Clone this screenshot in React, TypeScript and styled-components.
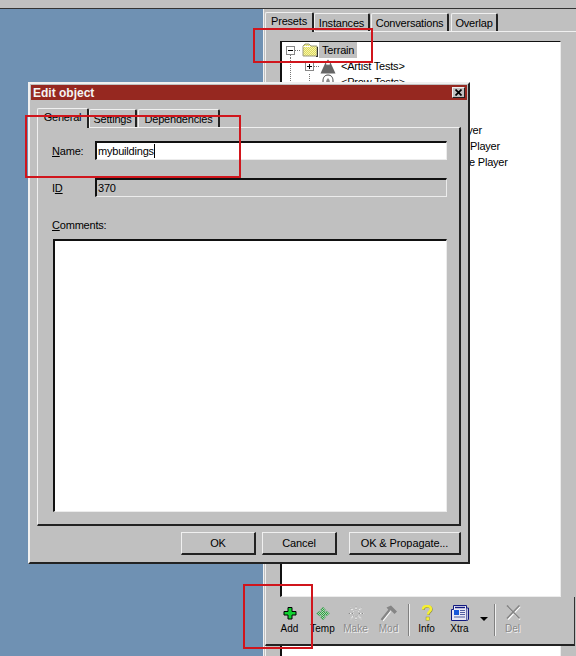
import styled, { createGlobalStyle, css } from "styled-components";

const GlobalStyle = createGlobalStyle`
html, body {
  margin: 0;
  padding: 0;
  background: #c0c0c0;
}
* {
  box-sizing: border-box;
}
`

const sunken = css`
border-style: solid;
border-width: 2px 1px 1px 2px;
border-color: #111 #ececec #ececec #111;
`

function Guide({ kind }: { kind: "box-minus" | "box-plus" | "line" | "branch" | "none" }): JSX.Element {
  const hasBox = kind === "box-minus" || kind === "box-plus";
  return (
    <svg width="19" height="16" viewBox="0 0 19 16">
      {kind === "line" && <path d="M8.5 0V16" stroke="#777" strokeDasharray="1 1" />}
      {kind === "branch" && <path d="M8.5 0V8M9 8.5H19" stroke="#777" strokeDasharray="1 1" />}
      {hasBox && <path d="M13 8.5H19" stroke="#777" strokeDasharray="1 1" />}
      {kind === "box-minus" && <path d="M8.5 13V16" stroke="#777" strokeDasharray="1 1" />}
      {hasBox && <rect x="4.5" y="4.5" width="8" height="8" fill="#fff" stroke="#888" />}
      {hasBox && <path d="M6 8.5H11" stroke="#000" />}
      {kind === "box-plus" && <path d="M8.5 6V11" stroke="#000" />}
    </svg>
  );
}

function FolderIcon(): JSX.Element {
  return (
    <svg width="16" height="14" viewBox="0 0 16 14">
      <defs>
        <pattern id="folderDither" width="2" height="2" patternUnits="userSpaceOnUse">
          <rect width="2" height="2" fill="#f8f6a8" />
          <rect width="1" height="1" fill="#dcd860" />
          <rect x="1" y="1" width="1" height="1" fill="#dcd860" />
        </pattern>
      </defs>
      <path d="M1 3L3 1H7L9 3H15V13H1Z" fill="url(#folderDither)" stroke="#9a9a80" />
      <path d="M14 13.5H16M15.5 4V13" stroke="#333" />
      <path d="M1.5 3.5H8" stroke="#fff" />
    </svg>
  );
}

function MountainIcon(): JSX.Element {
  return (
    <svg width="16" height="15" viewBox="0 0 16 15">
      <path d="M0.5 14.5L5.5 3.5L8 0.5L10.5 3.5L15.5 14.5Z" fill="#666" />
      <path d="M6 4.5L8 1.8L10 4.5L9 6.5L8 5L7 6.5Z" fill="#fff" />
    </svg>
  );
}

function DomeIcon(): JSX.Element {
  return (
    <svg width="16" height="16" viewBox="0 0 16 16">
      <path d="M3 14V7C3 3 5 1 8 1C11 1 13 3 13 7V14Z" fill="#fff" stroke="#444" />
      <path d="M5 14L6.5 6L8 4L9.5 6L11 14Z" fill="#888" />
    </svg>
  );
}

function AddIcon(): JSX.Element {
  return (
    <svg width="16" height="16" viewBox="0 0 16 16">
      <path d="M6 2.5H10V6.5H14V10H10V14H6V10H2V6.5H6Z" fill="#10d030" stroke="#000" />
    </svg>
  );
}

function TempIcon(): JSX.Element {
  return (
    <svg width="16" height="16" viewBox="0 0 16 16">
      <defs>
        <pattern id="tempDither" width="2" height="2" patternUnits="userSpaceOnUse">
          <rect width="2" height="2" fill="#b4dcb4" />
          <rect width="1" height="1" fill="#2c9a44" />
          <rect x="1" y="1" width="1" height="1" fill="#2c9a44" />
        </pattern>
      </defs>
      <path d="M8 2L10.5 5H9.5V7H11.5V6L14.5 8.5L11.5 11V10H9.5V12H10.5L8 15L5.5 12H6.5V10H4.5V11L1.5 8.5L4.5 6V7H6.5V5H5.5Z" fill="url(#tempDither)" stroke="#5ca86c" strokeWidth="0.6" />
    </svg>
  );
}

function MakeIcon(): JSX.Element {
  const rays = "M8 1V6M8 11V16M0.5 8.5H5.5M10.5 8.5H15.5M2.5 3L6 6.5M10 10.5L13.5 14M13.5 3L10 6.5M6 10.5L2.5 14";
  return (
    <svg width="16" height="16" viewBox="0 0 16 16">
      <path d={rays} stroke="#f4f4f4" strokeWidth="1.2" />
      <path d={rays} stroke="#8c8c8c" strokeWidth="1" strokeDasharray="1.5 1.5" />
    </svg>
  );
}

function ModIcon(): JSX.Element {
  return (
    <svg width="18" height="16" viewBox="0 0 18 16">
      <path d="M2.5 15.5L10 6" stroke="#fff" strokeWidth="2.4" />
      <path d="M1.5 15L9.5 5" stroke="#858585" strokeWidth="2.2" />
      <path d="M6.5 2.5L11 0.5L17 6.5L14.5 9L10.5 5L9 5.5Z" fill="#858585" />
    </svg>
  );
}

function InfoIcon(): JSX.Element {
  return (
    <svg width="16" height="16" viewBox="0 0 16 16">
      <path d="M4.5 5C4.5 2.5 6 1.5 8.5 1.5C11 1.5 12.5 2.5 12.5 4.5C12.5 7 9.5 7 9.5 10" fill="none" stroke="#8a8a50" strokeWidth="2.4" />
      <path d="M4 4.5C4 2 5.5 1 8 1C10.5 1 12 2 12 4C12 6.5 9 6.5 9 9.5" fill="none" stroke="#f6f030" strokeWidth="2.4" />
      <rect x="7" y="12" width="3.5" height="3.5" fill="#f6f030" stroke="#8a8a50" strokeWidth="0.5" />
    </svg>
  );
}

function XtraIcon(): JSX.Element {
  return (
    <svg width="20" height="16" viewBox="0 0 20 16">
      <path d="M3.5 0.5H16.5V15.5H1.5V4.5H3.5Z" fill="#e8e8f4" stroke="#101880" />
      <path d="M16.5 3H18.5V14C18.5 15 17.5 15.5 16.5 15.5" fill="#b8c0d8" stroke="#101880" />
      <path d="M5 2.5H15" stroke="#101880" strokeWidth="1.4" />
      <rect x="4" y="5" width="5" height="5" fill="#1858d8" />
      <path d="M10 5.5H15M10 7.5H15M10 9.5H15M4 12H15" stroke="#5060a0" />
    </svg>
  );
}

function DelIcon(): JSX.Element {
  return (
    <svg width="16" height="16" viewBox="0 0 16 16">
      <path d="M3 1.5L15 14.5M15 1.5L3 14.5" stroke="#fff" strokeWidth="1.6" />
      <path d="M2 0.5L14.5 13.5M14.5 0.5L2 13.5" stroke="#858585" strokeWidth="1.6" />
    </svg>
  );
}

function CloseIcon(): JSX.Element {
  return (
    <svg width="7" height="7" viewBox="0 0 7 7">
      <path d="M0.5 0.5L6.5 6.5M6.5 0.5L0.5 6.5" stroke="#000" strokeWidth="1.7" />
    </svg>
  );
}

function App(): JSX.Element {
  return (
    <Screen>
      <GlobalStyle />
      <TopStrip />
      <Workspace>
        <Canvas />
        <Panel>
          <TabRow>
            <Tab $active $width={49}>Presets</Tab>
            <Tab $width={56}>Instances</Tab>
            <Tab $width={78} $gap={1}>Conversations</Tab>
            <Tab $width={47} $gap={2}>Overlap</Tab>
          </TabRow>
          <PanelPage>
            <Tree>
              <TreeRow>
                <Guide kind="box-minus" />
                <IconSlot $offset={1}><FolderIcon /></IconSlot>
                <TreeLabel $selected>Terrain</TreeLabel>
              </TreeRow>
              <TreeRow>
                <Guide kind="line" />
                <Guide kind="box-plus" />
                <MountainIcon />
                <TreeLabel>&lt;Artist Tests&gt;</TreeLabel>
              </TreeRow>
              <TreeRow>
                <Guide kind="line" />
                <Guide kind="branch" />
                <IconSlot $offset={0}><DomeIcon /></IconSlot>
                <TreeLabel>&lt;Prow Tests&gt;</TreeLabel>
              </TreeRow>
              <TreeRow />
              <TreeRow />
              <TreeRow $indent={170}>Player</TreeRow>
              <TreeRow $indent={188}>Player</TreeRow>
              <TreeRow $indent={187}>e Player</TreeRow>
            </Tree>
            <Toolbar>
              <ToolButton><AddIcon />Add</ToolButton>
              <ToolButton><TempIcon />Temp</ToolButton>
              <ToolButton $disabled><MakeIcon />Make</ToolButton>
              <ToolButton $disabled><ModIcon />Mod</ToolButton>
              <ToolSeparator $left={3} />
              <ToolButton><InfoIcon />Info</ToolButton>
              <ToolButton><XtraIcon />Xtra</ToolButton>
              <DropArrow />
              <ToolSeparator $left={2} />
              <ToolButton $disabled><DelIcon />Del</ToolButton>
            </Toolbar>
            <TreeTail />
          </PanelPage>
        </Panel>
      </Workspace>

      <Dialog>
        <TitleBar>
          Edit object
          <CloseButton><CloseIcon /></CloseButton>
        </TitleBar>
        <DialogBody>
          <TabRow>
            <Tab $active $width={52}>General</Tab>
            <Tab $width={48}>Settings</Tab>
            <Tab $width={82} $gap={1}>Dependencies</Tab>
          </TabRow>
          <DialogPage>
            <FieldRow>
              <FieldLabel><u>N</u>ame:</FieldLabel>
              <Field>mybuildings<Caret /></Field>
            </FieldRow>
            <FieldRow>
              <FieldLabel>I<u>D</u></FieldLabel>
              <Field $readOnly>370</Field>
            </FieldRow>
            <CommentsLabel><u>C</u>omments:</CommentsLabel>
            <CommentsBox />
          </DialogPage>
          <ButtonRow>
            <PushButton $width={75}>OK</PushButton>
            <PushButton $width={75}>Cancel</PushButton>
            <PushButton $width={112} $gap={12}>OK &amp; Propagate...</PushButton>
          </ButtonRow>
        </DialogBody>
      </Dialog>

      <Callout $x={253} $y={28} $w={120} $h={35} />
      <Callout $x={25} $y={115} $w={216} $h={63} />
      <Callout $x={243} $y={584} $w={70} $h={65} />
    </Screen>
  );
};

const Screen = styled.div`
position: relative;
width: 576px;
height: 656px;
overflow: hidden;
display: flex;
flex-direction: column;
background-color: #c0c0c0;
color: #000;
font-family: "Liberation Sans", Arial, sans-serif;
font-size: 11px;
letter-spacing: -0.2px;
`
const TopStrip = styled.div`
height: 9px;
flex: none;
background-color: #c0c0c0;
border-bottom: 1px solid #333;
`
const Workspace = styled.div`
flex: 1;
min-height: 0;
display: flex;
`
const Canvas = styled.div`
width: 263px;
flex: none;
background-color: #6f91b3;
`
const Panel = styled.div`
flex: 1;
display: flex;
flex-direction: column;
padding: 3px 0 0 1px;
border-left: 1px solid #f0f0f0;
`
const TabRow = styled.div`
display: flex;
align-items: flex-end;
height: 19px;
flex: none;
position: relative;
z-index: 1;
`
const Tab = styled.div<{ $active?: boolean; $width: number; $gap?: number }>`
width: ${(p) => p.$width}px;
height: ${(p) => (p.$active ? 20 : 18)}px;
margin-left: ${(p) => p.$gap || 0}px;
margin-bottom: ${(p) => (p.$active ? -1 : 0)}px;
display: flex;
justify-content: center;
padding-top: ${(p) => (p.$active ? 2 : 3)}px;
line-height: 13px;
background-color: #c0c0c0;
border-top: 1px solid #f0f0f0;
border-left: 1px solid #f0f0f0;
border-right: 2px solid #222;
border-radius: 2px 2px 0 0;
`
const PanelPage = styled.div`
flex: 1;
min-height: 0;
display: flex;
flex-direction: column;
padding-top: 9px;
border-top: 1px solid #f0f0f0;
border-left: 1px solid #f0f0f0;
`
const Tree = styled.div`
${sunken}
border-top-width: 1px;
height: 556px;
flex: none;
width: 281px;
margin-left: 14px;
background-color: #fff;
`
const TreeRow = styled.div<{ $indent?: number }>`
height: 16px;
display: flex;
align-items: center;
line-height: 16px;
padding-left: ${(p) => p.$indent || 0}px;
`
const IconSlot = styled.span<{ $offset: number }>`
display: flex;
margin-left: ${(p) => p.$offset}px;
`
const TreeLabel = styled.span<{ $selected?: boolean }>`
margin-left: ${(p) => (p.$selected ? 1 : 2)}px;
padding: 0 3px;
background-color: ${(p) => (p.$selected ? "#c0c0c0" : "transparent")};
`
const Toolbar = styled.div`
height: 49px;
flex: none;
display: flex;
align-items: flex-start;
padding: 6px 0 0 7px;
margin: 0 1px 0 -1px;
background-color: #c0c0c0;
border-left: 1px solid #f0f0f0;
border-right: 1px solid #333;
border-bottom: 2px solid #222;
`
const ToolButton = styled.div<{ $disabled?: boolean }>`
width: 33px;
height: 32px;
display: flex;
flex-direction: column;
align-items: center;
justify-content: flex-end;
line-height: 13px;
font-size: 10px;
letter-spacing: 0;
color: ${(p) => (p.$disabled ? "#8a8a8a" : "#000")};
text-shadow: ${(p) => (p.$disabled ? "1px 1px 0 #f2f2f2" : "none")};
svg {
  flex: none;
  margin-bottom: 1px;
}
`
const ToolSeparator = styled.div<{ $left: number }>`
width: 2px;
height: 32px;
margin: 1px 0 0 ${(p) => p.$left}px;
background-color: #808080;
border-right: 1px solid #f0f0f0;
`
const DropArrow = styled.div`
width: 16px;
height: 20px;
position: relative;
&::after {
  content: "";
  position: absolute;
  left: 4px;
  top: 14px;
  border-style: solid;
  border-width: 4px 4px 0;
  border-color: #000 transparent transparent;
}
`
const TreeTail = styled.div`
flex: 1;
width: 281px;
margin-left: 14px;
background-color: #fff;
border-left: 2px solid #111;
border-right: 1px solid #ececec;
`
const Dialog = styled.div`
position: absolute;
z-index: 2;
left: 28px;
top: 82px;
width: 442px;
height: 482px;
padding: 1px;
background-color: #c0c0c0;
border-style: solid;
border-width: 2px;
border-color: #f0f0f0 #222 #222 #f0f0f0;
display: flex;
flex-direction: column;
`
const TitleBar = styled.div`
height: 15px;
flex: none;
display: flex;
align-items: center;
justify-content: space-between;
padding: 0 2px;
background-color: #962820;
color: #f4f4f4;
font-size: 12px;
font-weight: 700;
letter-spacing: 0;
`
const CloseButton = styled.div`
width: 13px;
height: 11px;
display: flex;
align-items: center;
justify-content: center;
background-color: #c0c0c0;
border-style: solid;
border-width: 1px;
border-color: #f0f0f0 #222 #222 #f0f0f0;
`
const DialogBody = styled.div`
flex: 1;
display: flex;
flex-direction: column;
padding: 8px 6px 0;
`
const DialogPage = styled.div`
height: 399px;
flex: none;
padding: 13px 12px 0 14px;
border-style: solid;
border-width: 1px 2px 2px 1px;
border-color: #f0f0f0 #222 #222 #f0f0f0;
display: flex;
flex-direction: column;
`
const FieldRow = styled.div`
display: flex;
align-items: center;
margin-bottom: 18px;
`
const FieldLabel = styled.label`
width: 43px;
flex: none;
`
const Field = styled.div<{ $readOnly?: boolean }>`
${sunken}
flex: 1;
height: 19px;
display: flex;
align-items: center;
padding-left: 1px;
background-color: ${(p) => (p.$readOnly ? "#c0c0c0" : "#fff")};
`
const Caret = styled.span`
width: 1px;
height: 14px;
background-color: #000;
`
const CommentsLabel = styled.label`
line-height: 14px;
margin: 3px 0 7px;
`
const CommentsBox = styled.div`
${sunken}
height: 273px;
margin-left: 1px;
background-color: #fff;
`
const ButtonRow = styled.div`
display: flex;
justify-content: flex-end;
gap: 6px;
margin-top: 6px;
`
const PushButton = styled.button<{ $width: number; $gap?: number }>`
width: ${(p) => p.$width}px;
height: 23px;
margin-left: ${(p) => (p.$gap ? p.$gap - 6 : 0)}px;
padding: 0;
font-family: inherit;
font-size: 11px;
letter-spacing: -0.1px;
color: #000;
background-color: #c0c0c0;
border-style: solid;
border-width: 1px 2px 2px 1px;
border-color: #f0f0f0 #222 #222 #f0f0f0;
`
const Callout = styled.div<{ $x: number; $y: number; $w: number; $h: number }>`
position: absolute;
z-index: 3;
left: ${(p) => p.$x}px;
top: ${(p) => p.$y}px;
width: ${(p) => p.$w}px;
height: ${(p) => p.$h}px;
border: 2px solid #d0151c;
`

export default App;
